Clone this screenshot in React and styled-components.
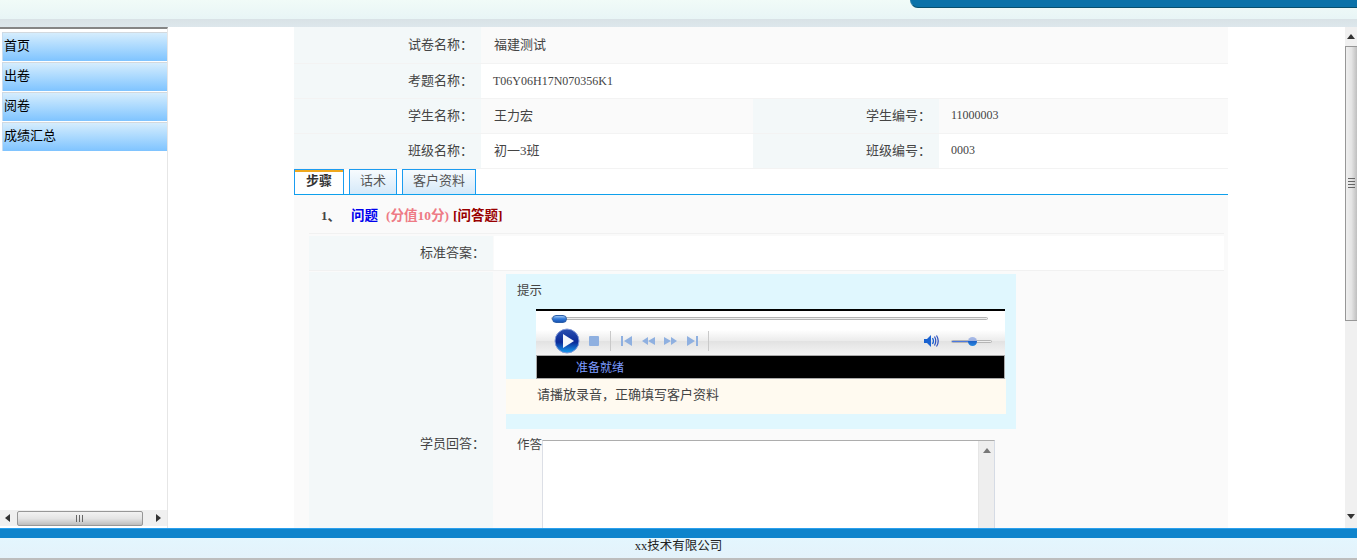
import React from 'react';
import styled, { createGlobalStyle } from 'styled-components';

const GlobalStyle = createGlobalStyle`
  html, body { margin: 0; padding: 0; height: 100%; overflow: hidden; background: #fff; }
  body { font-family: "Liberation Serif", "Noto Sans CJK SC", serif; font-size: 13px; color: #444; }
  * { box-sizing: border-box; }
`;

const Page = styled.div`
  width: 1357px;
  height: 560px;
  display: flex;
  flex-direction: column;
  overflow: hidden;
`;

/* header */
const Header = styled.div`
  height: 27px;
  flex: none;
  display: flex;
  flex-direction: column;
`;
const HeaderTop = styled.div`
  height: 19px;
  display: flex;
  justify-content: flex-end;
  background: linear-gradient(#f1fbf8, #e8f5f6);
`;
const HeaderBadge = styled.div`
  width: 447px;
  height: 8px;
  background: #0b72a9;
  border-bottom: 1px solid #07506f;
  border-left: 1px solid #2a7ea8;
  border-bottom-left-radius: 9px;
`;
const HeaderBand = styled.div`
  height: 8px;
  background: linear-gradient(#d9e2e6, #dde7ec);
`;

/* body */
const Body = styled.div`
  flex: 1;
  min-height: 0;
  display: flex;
`;

const Sidebar = styled.div`
  width: 168px;
  flex: none;
  display: flex;
  flex-direction: column;
  border-right: 1px solid #e6e6e6;
  border-top: 2px solid #858585;
  padding-bottom: 2px;
`;
const Menu = styled.div`
  flex: 1;
  padding: 3px 0 0 2px;
  display: flex;
  flex-direction: column;
  gap: 1px;
`;
const MenuItem = styled.div`
  height: 29px;
  padding-left: 1px;
  line-height: 25px;
  font-size: 13px;
  color: #000;
  border-top: 1px solid #d3d9de;
  border-left: 1px solid #c7dcef;
  background: linear-gradient(#d5edfd, #7fc4ff);
`;
const HBar = styled.div`
  height: 16px;
  flex: none;
  display: flex;
  align-items: center;
  background: #f0f0f0;
`;
const HArrow = styled.div`
  width: ${p => p.$width}px;
  flex: none;
  display: flex;
  justify-content: center;
`;
const HThumb = styled.div`
  width: 126px;
  height: 15px;
  margin-left: 3px;
  border: 1px solid #979797;
  border-radius: 2px;
  background: linear-gradient(#f2f2f2, #e4e4e4 50%, #bdbdbd);
  display: flex;
  align-items: center;
  justify-content: center;
  gap: 1px;
`;
const HGrip = styled.span`
  width: 1px;
  height: 7px;
  background: #666;
  margin-right: 1px;
`;

const Main = styled.div`
  flex: 1;
  min-width: 0;
  overflow: hidden;
  padding-left: 126px;
`;
const Column = styled.div`
  width: 934px;
`;

const InfoRow = styled.div`
  display: flex;
  height: ${p => (p.$first ? 37 : 35)}px;
  background: ${p => (p.$shaded ? '#fafafa' : '#fff')};
  border-bottom: 1px solid #f3f3f3;
`;
const Label = styled.div`
  width: ${p => p.$width || 187}px;
  flex: none;
  display: flex;
  align-items: center;
  justify-content: flex-end;
  padding: 0 8px 4px 0;
  background: #f3f8f9;
`;
const Value = styled.div`
  width: ${p => (p.$width ? `${p.$width}px` : 'auto')};
  flex: ${p => (p.$width ? 'none' : 1)};
  display: flex;
  align-items: center;
  padding: 0 0 4px 13px;
`;
const CodeValue = styled(Value)`
  font-size: 12px;
  padding: 0 0 ${p => p.$lift || 0}px 12px;
`;

const Tabs = styled.div`
  height: 26px;
  display: flex;
  gap: 5px;
  border-bottom: 1px solid #0ea0ec;
`;
const Tab = styled.div`
  width: ${p => p.$width}px;
  height: 25px;
  padding-bottom: 5px;
  display: flex;
  align-items: center;
  justify-content: center;
  border: 1px solid #1b9cf0;
  border-bottom: 0;
  font-weight: ${p => (p.$active ? 700 : 400)};
  color: ${p => (p.$active ? '#333' : '#555')};
  background: ${p => (p.$active ? '#fff' : 'linear-gradient(#f7fbfe, #d5e9f9)')};
  box-shadow: ${p => (p.$active ? 'inset 0 2px 0 #f0a81e' : 'none')};
`;

const Question = styled.div`
  background: #fafafa;
  padding: 0 4px 0 15px;
`;
const Title = styled.div`
  height: 39px;
  display: flex;
  align-items: center;
  padding-left: 12px;
  font-size: 13.5px;
  font-weight: 700;
  border-bottom: 1px solid #f1f1f1;
`;
const TitleNum = styled.span`
  width: 30px;
  font-size: 13px;
  color: #444;
`;
const TitlePart = styled.span`
  color: ${p => p.$color};
  margin-right: ${p => p.$gap || 0}px;
`;
const AnswerRow = styled.div`
  display: flex;
  margin-top: 2px;
  height: 35px;
  gap: 1px;
  border-bottom: 1px solid #f1f1f1;
`;
const AnswerLabel = styled(Label)`
  width: 184px;
`;
const AnswerValue = styled.div`
  flex: 1;
  background: #fff;
`;
const ReplyRow = styled.div`
  display: flex;
  margin-top: 1px;
  height: 344px;
`;
const ReplyCell = styled.div`
  flex: 1;
  padding: 2px 0 0 13px;
`;

const Hint = styled.div`
  width: 510px;
  height: 155px;
  background: #e0f7fe;
  display: flex;
  flex-direction: column;
`;
const HintTitle = styled.div`
  height: 35px;
  padding: 0 0 4px 11px;
  font-size: 12.5px;
  display: flex;
  align-items: center;
`;
const Notice = styled.div`
  width: 500px;
  height: 35px;
  padding: 0 0 6px 31px;
  display: flex;
  align-items: center;
  background: #fffaf0;
`;

/* media player */
const Player = styled.div`
  width: 469px;
  height: 70px;
  margin-left: 30px;
  flex: none;
  display: flex;
  flex-direction: column;
  border-top: 2px solid #000;
`;
const SeekRow = styled.div`
  height: 19px;
  flex: none;
  background: #fff;
  padding: 3px 17px 0 15px;
`;
const SeekTrack = styled.div`
  height: 3px;
  margin-top: 3px;
  border: 1px solid #b4b4b4;
  border-radius: 2px;
  background: #eee;
  display: flex;
  align-items: center;
`;
const SeekThumb = styled.div`
  width: 15px;
  height: 8px;
  border-radius: 4px;
  flex: none;
  border: 1px solid #2c5fa8;
  background: linear-gradient(#9cc4f2, #2f78d8 50%, #1a55b4);
`;
const Controls = styled.div`
  height: 25px;
  flex: none;
  display: flex;
  align-items: center;
  padding: 0 13px 3px 18px;
  background: linear-gradient(#fff, #ececec 42%, #e2e2e2 44%, #f4f4f4);
`;
const StopButton = styled.div`
  width: 10px;
  height: 10px;
  margin-left: 9px;
  flex: none;
  border-radius: 1px;
  background: #8fb0e0;
`;
const Sep = styled.div`
  width: 1px;
  height: 20px;
  flex: none;
  background: #c9c9c9;
  margin: ${p => p.$margin};
`;
const Spacer = styled.div`
  flex: 1;
`;
const VolumeSlider = styled.div`
  width: 41px;
  height: 3px;
  margin-left: 11px;
  border: 1px solid #b5b5b5;
  border-radius: 2px;
  background: linear-gradient(90deg, #4b78e0 50%, #eee 50%);
  display: flex;
  align-items: center;
  padding-left: 16px;
`;
const VolumeKnob = styled.div`
  width: 9px;
  height: 9px;
  border-radius: 50%;
  flex: none;
  background: linear-gradient(#a8bbe8, #9db0e0 45%, #1b62c8 50%, #2a8ae0);
`;
const Status = styled.div`
  height: 24px;
  flex: none;
  font-size: 12px;
  background: #000;
  border: 1px solid #aaa;
  color: #7c9cff;
  padding-left: 39px;
  display: flex;
  align-items: center;
`;

/* answer box */
const AnswerBox = styled.div`
  display: flex;
  align-items: flex-start;
  margin-top: 11px;
  padding-left: 11px;
`;
const AnswerCaption = styled.div`
  width: 25px;
  flex: none;
  font-size: 12.5px;
  line-height: 11px;
  white-space: nowrap;
`;
const TextBox = styled.div`
  width: 453px;
  height: 200px;
  display: flex;
  background: #fff;
  border: 1px solid #dcdfe6;
  border-top-color: #adadad;
  border-right-color: #d5dbe5;
`;
const TextArea = styled.div`
  flex: 1;
`;
const TextTrack = styled.div`
  width: 16px;
  flex: none;
  background: #eee;
  border-left: 1px solid #e6e6e6;
  display: flex;
  justify-content: center;
  padding-top: 7px;
`;

/* page scrollbar */
const VBar = styled.div`
  width: 12px;
  flex: none;
  display: flex;
  flex-direction: column;
  background: #f0f0f0;
  padding-bottom: 2px;
`;
const VArrow = styled.div`
  height: ${p => p.$height}px;
  flex: none;
  display: flex;
  align-items: center;
  justify-content: center;
`;
const VThumb = styled.div`
  height: 275px;
  flex: none;
  border: 1px solid #979797;
  border-right: 0;
  background: linear-gradient(90deg, #efefef, #e4e4e4 50%, #bfbfbf);
  display: flex;
  flex-direction: column;
  align-items: center;
  justify-content: center;
  gap: 1px;
`;
const VGrip = styled.span`
  width: 7px;
  height: 1px;
  background: #666;
  margin-bottom: 1px;
`;
const VFill = styled.div`
  flex: 1;
`;

/* footer */
const Footer = styled.div`
  height: 32px;
  flex: none;
  display: flex;
  flex-direction: column;
`;
const FooterStripe = styled.div`
  height: 10px;
  flex: none;
  background: #0e84cc;
  border-top: 1px solid #2aa0ee;
`;
const FooterText = styled.div`
  height: 22px;
  flex: none;
  display: flex;
  align-items: center;
  justify-content: center;
  padding-bottom: 4px;
  font-size: 12.5px;
  line-height: 14px;
  color: #222;
  background: linear-gradient(#e3f6fe, #e4f2fa);
  border-bottom: 2px solid #bdbdbd;
`;

const Arrow = ({ dir, color = '#333' }) => {
  const pts = {
    up: '0,5 4,0 8,5',
    down: '0,0 8,0 4,5',
    left: '5,0 5,8 0,4',
    right: '0,0 5,4 0,8',
  }[dir];
  const box = dir === 'up' || dir === 'down' ? '0 0 8 5' : '0 0 5 8';
  const [w, h] = dir === 'up' || dir === 'down' ? [8, 5] : [5, 8];
  return (
    <svg width={w} height={h} viewBox={box}>
      <polygon points={pts} fill={color} />
    </svg>
  );
};

const PlayIcon = () => (
  <svg width="26" height="26" viewBox="0 0 26 26" style={{ flex: 'none' }}>
    <defs>
      <linearGradient id="playBall" x1="0" y1="0" x2="0" y2="1">
        <stop offset="0" stopColor="#2a4fb0" />
        <stop offset="0.55" stopColor="#0a2a98" />
        <stop offset="1" stopColor="#18a0f4" />
      </linearGradient>
    </defs>
    <circle cx="13" cy="13" r="12" fill="url(#playBall)" stroke="#8098d8" />
    <polygon points="9,6 20,13 9,20" fill="#f4f6fb" />
  </svg>
);

const TransportIcons = () => (
  <svg width="77" height="12" viewBox="0 0 77 12" fill="#8fb0e0">
    <rect x="0" y="1" width="2" height="10" />
    <polygon points="11,1 11,11 3,6" />
    <polygon points="27,2 27,10 21,6" />
    <polygon points="34,2 34,10 27,6" />
    <polygon points="43,2 43,10 50,6" />
    <polygon points="50,2 50,10 56,6" />
    <polygon points="66,1 66,11 74,6" />
    <rect x="75" y="1" width="2" height="10" />
  </svg>
);

const SpeakerIcon = () => (
  <svg width="16" height="14" viewBox="0 0 16 14" fill="none" style={{ flex: 'none' }}>
    <polygon points="0,5 3,5 7,1 7,13 3,9 0,9" fill="#1a62d0" />
    <path d="M8.5 4 Q10.5 7 8.5 10" stroke="#1a62d0" strokeWidth="1.3" />
    <path d="M10.5 2.5 Q13 7 10.5 11.5" stroke="#2a50c0" strokeWidth="1.2" />
    <path d="M12.5 1.5 Q16 7 12.5 12.5" stroke="#2a50c0" strokeWidth="1.2" />
  </svg>
);

const menus = ['首页', '出卷', '阅卷', '成绩汇总'];

export default function App() {
  return (
    <Page>
      <GlobalStyle />
      <Header>
        <HeaderTop>
          <HeaderBadge />
        </HeaderTop>
        <HeaderBand />
      </Header>
      <Body>
        <Sidebar>
          <Menu>
            {menus.map(m => <MenuItem key={m}>{m}</MenuItem>)}
          </Menu>
          <HBar>
            <HArrow $width={14}><Arrow dir="left" /></HArrow>
            <HThumb><HGrip /><HGrip /><HGrip /></HThumb>
            <Spacer />
            <HArrow $width={17}><Arrow dir="right" /></HArrow>
          </HBar>
        </Sidebar>
        <Main>
          <Column>
            <InfoRow $first $shaded>
              <Label>试卷名称：</Label>
              <Value>福建测试</Value>
            </InfoRow>
            <InfoRow>
              <Label>考题名称：</Label>
              <CodeValue>T06Y06H17N070356K1</CodeValue>
            </InfoRow>
            <InfoRow $shaded>
              <Label>学生名称：</Label>
              <Value $width={272}>王力宏</Value>
              <Label $width={186}>学生编号：</Label>
              <CodeValue $lift={2}>11000003</CodeValue>
            </InfoRow>
            <InfoRow>
              <Label>班级名称：</Label>
              <Value $width={272}>初一3班</Value>
              <Label $width={186}>班级编号：</Label>
              <CodeValue $lift={2}>0003</CodeValue>
            </InfoRow>
            <Tabs>
              <Tab $active $width={50}>步骤</Tab>
              <Tab $width={48}>话术</Tab>
              <Tab $width={74}>客户资料</Tab>
            </Tabs>
            <Question>
              <Title>
                <TitleNum>1、</TitleNum>
                <TitlePart $color="#0000ee" $gap={8}>问题</TitlePart>
                <TitlePart $color="#ee7a85" $gap={4}>(分值10分)</TitlePart>
                <TitlePart $color="#990000">[问答题]</TitlePart>
              </Title>
              <AnswerRow>
                <AnswerLabel>标准答案：</AnswerLabel>
                <AnswerValue />
              </AnswerRow>
              <ReplyRow>
                <AnswerLabel>学员回答：</AnswerLabel>
                <ReplyCell>
                  <Hint>
                    <HintTitle>提示</HintTitle>
                    <Player>
                      <SeekRow>
                        <SeekTrack><SeekThumb /></SeekTrack>
                      </SeekRow>
                      <Controls>
                        <PlayIcon />
                        <StopButton />
                        <Sep $margin="0 10px 0 11px" />
                        <TransportIcons />
                        <Sep $margin="0 0 0 10px" />
                        <Spacer />
                        <SpeakerIcon />
                        <VolumeSlider><VolumeKnob /></VolumeSlider>
                      </Controls>
                      <Status>准备就绪</Status>
                    </Player>
                    <Notice>请播放录音，正确填写客户资料</Notice>
                  </Hint>
                  <AnswerBox>
                    <AnswerCaption>作答</AnswerCaption>
                    <TextBox>
                      <TextArea />
                      <TextTrack><Arrow dir="up" color="#777" /></TextTrack>
                    </TextBox>
                  </AnswerBox>
                </ReplyCell>
              </ReplyRow>
            </Question>
          </Column>
        </Main>
        <VBar>
          <VArrow $height={19}><Arrow dir="up" /></VArrow>
          <VThumb><VGrip /><VGrip /><VGrip /><VGrip /></VThumb>
          <VFill />
          <VArrow $height={19}><Arrow dir="down" /></VArrow>
        </VBar>
      </Body>
      <Footer>
        <FooterStripe />
        <FooterText>xx技术有限公司</FooterText>
      </Footer>
    </Page>
  );
}
